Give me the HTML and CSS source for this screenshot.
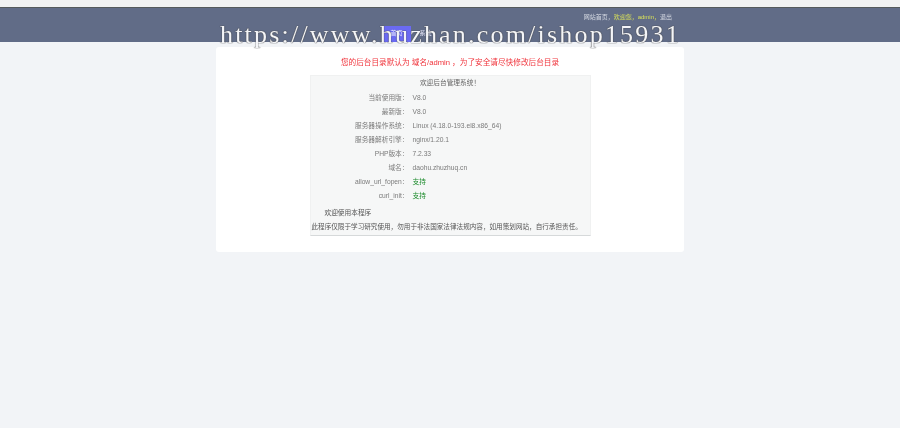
FILE: index.html
```html
<!DOCTYPE html>
<html lang="zh">
<head>
<meta charset="utf-8">
<title>后台管理系统</title>
<link rel="stylesheet" href="styles.css">
</head>
<body>
<div class="page">
  <header class="header">
    <div class="top-links">网站首页，<span class="hello">欢迎您，admin，</span>退出</div>
    <nav class="nav"><a class="nav-item active">首页</a><a class="nav-item">系统</a></nav>
  </header>
  <main class="card">
    <p class="notice">您的后台目录默认为 域名/admin ，为了安全请尽快修改后台目录</p>
    <section class="panel">
      <h1 class="panel-title">欢迎后台管理系统！</h1>
      <div class="row"><span class="label">当前使用版：</span><span class="value">V8.0</span></div>
      <div class="row"><span class="label">最新版：</span><span class="value">V8.0</span></div>
      <div class="row"><span class="label">服务器操作系统：</span><span class="value">Linux (4.18.0-193.el8.x86_64)</span></div>
      <div class="row"><span class="label">服务器解析引擎：</span><span class="value">nginx/1.20.1</span></div>
      <div class="row"><span class="label">PHP版本：</span><span class="value">7.2.33</span></div>
      <div class="row"><span class="label">域名：</span><span class="value">daohu.zhuzhuq.cn</span></div>
      <div class="row"><span class="label">allow_url_fopen：</span><span class="value ok">支持</span></div>
      <div class="row"><span class="label">curl_init：</span><span class="value ok">支持</span></div>
      <p class="intro">欢迎使用本程序</p>
      <p class="legal">此程序仅限于学习研究使用，勿用于非法国家法律法规内容，如用策划网站，自行承担责任。</p>
    </section>
  </main>
  <div class="watermark">https://www.huzhan.com/ishop15931</div>
</div>
</body>
</html>
```

FILE: styles.css
```css
* { box-sizing: border-box; }
html, body { margin: 0; height: 100%; }
body {
  background: #f2f4f7;
  font-family: "Liberation Sans", "Noto Sans CJK SC", sans-serif;
  font-size: 6.7px;
  color: #666;
  overflow: hidden;
}
.page {
  position: relative;
  height: 428px;
  border-top: 7px solid #f1f2f2;
  filter: blur(0.35px);
}
.header {
  height: 35px;
  background: #616c87;
  border-top: 1px solid #555a5c;
  display: flex;
  flex-direction: column;
  position: relative;
}
.top-links {
  align-self: flex-end;
  margin: 5px 228px 0 0;
  height: 12px;
  line-height: 9px;
  font-size: 6px;
  color: #d7dbe4;
  white-space: nowrap;
}
.hello { color: #d8e05a; }
.nav { display: flex; margin: 1px 0 0 382px; height: 17px; }
.nav-item {
  width: 29px;
  text-align: center;
  line-height: 15px;
  font-size: 6px;
  color: #eef;
}
.active { background: #6a6af2; }
.card {
  width: 468px;
  height: 205px;
  margin: 5px auto 0;
  background: #fff;
  border-radius: 3px;
  padding-top: 10px;
}
.notice {
  margin: 0 0 6px;
  height: 12px;
  line-height: 12px;
  text-align: center;
  font-size: 7.65px;
  color: #f0343c;
}
.panel {
  width: 281px;
  height: 161px;
  margin: 0 auto;
  background: #f6f7f7;
  border: 1px solid #f0f1f1;
  border-bottom-color: #d6d9da;
  color: #7a7a7a;
}
.panel-title {
  margin: 0;
  height: 15px;
  line-height: 14px;
  font-size: 6.7px;
  font-weight: 400;
  text-align: center;
  color: #666;
}
.row { display: flex; height: 14px; line-height: 14px; }
.label { width: 98px; text-align: right; flex: none; }
.value { margin-left: 4px; }
.ok { color: #1a8a2a; }
.intro { margin: 3px 0 0 14px; height: 14px; line-height: 14px; color: #555; }
.legal { margin: 0 0 0 1px; height: 14px; line-height: 14px; font-size: 6.6px; color: #555; white-space: nowrap; }
.watermark {
  position: absolute;
  left: 220px;
  top: 14px;
  font-family: "Liberation Serif", serif;
  font-size: 26px;
  letter-spacing: 2.2px;
  line-height: 28px;
  color: #f4f5f8;
  text-shadow: 0 0 1px #333, 0 0 1px #555;
  white-space: nowrap;
}
```
